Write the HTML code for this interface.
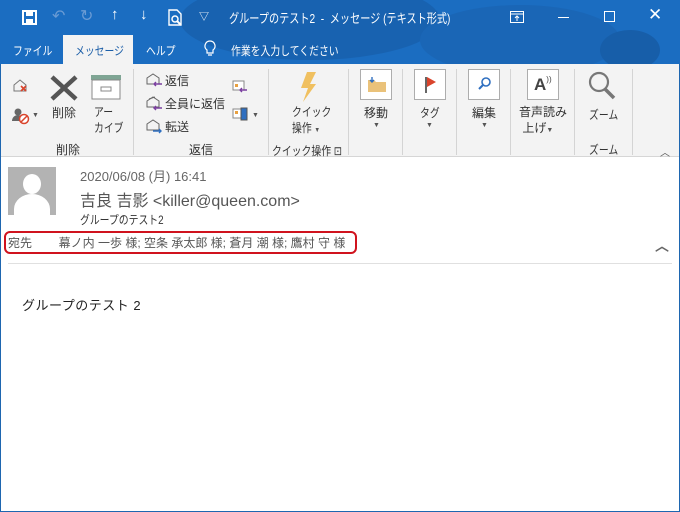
<!DOCTYPE html>
<html><head><meta charset="utf-8"><style>
*{margin:0;padding:0;box-sizing:border-box}
body{width:680px;height:512px;overflow:hidden;background:#fff;font-family:"Liberation Sans","Noto Sans CJK JP",sans-serif;position:relative;color:#222}
.a{position:absolute;white-space:nowrap}
.c{transform:scaleX(.82);transform-origin:0 0}
#top{position:absolute;left:0;top:0;width:680px;height:64px;background:#1b6dc1;overflow:hidden}
.blob{position:absolute;background:#1862b0;border-radius:50%}
.w{color:#fff}
#rib{position:absolute;left:1px;top:64px;width:678px;height:93px;background:#f3f3f3;border-bottom:1px solid #d6d6d6}
.sep{position:absolute;top:5px;width:1px;height:86px;background:#d4d4d4}
.t{font-size:12px;color:#333}
.box{position:absolute;width:32px;height:31px;border:1px solid #adadad;background:#fff}
.frame{position:absolute;left:0;top:64px;width:680px;height:448px;border:1px solid #1e66b0;border-top:none;pointer-events:none}
</style></head><body>
<div id="top">
 <div class="blob" style="left:180px;top:-20px;width:260px;height:80px"></div>
 <div class="blob" style="left:420px;top:5px;width:200px;height:70px;background:#1a66b6"></div>
 <div class="blob" style="left:600px;top:30px;width:60px;height:40px;background:#175ea9"></div>
 <svg class="a" style="left:22px;top:10px" width="16" height="16"><rect x="1" y="1" width="13" height="13" fill="none" stroke="#fff" stroke-width="2"/><rect x="4" y="2" width="7" height="4" fill="#fff"/><rect x="4" y="9" width="7" height="4" fill="#fff"/></svg>
 <div class="a" style="left:52px;top:6px;font-size:16px;color:#6a9bd4">↶</div>
 <div class="a" style="left:80px;top:6px;font-size:16px;color:#6a9bd4">↻</div>
 <div class="a w" style="left:111px;top:6px;font-size:15px;font-weight:bold">↑</div>
 <div class="a w" style="left:140px;top:6px;font-size:15px;font-weight:bold">↓</div>
 <svg class="a" style="left:168px;top:9px" width="16" height="18"><path d="M1 1h8l4 4v11H1z" fill="none" stroke="#fff" stroke-width="1.4"/><circle cx="7" cy="10" r="3" fill="none" stroke="#fff" stroke-width="1.5"/><path d="M9 12l4 4" stroke="#fff" stroke-width="2"/></svg>
 <div class="a w" style="left:199px;top:8px;font-size:10px">▽</div>
 <div class="a w" style="left:229px;top:8px;font-size:13px;transform:scaleX(.78);transform-origin:0 0">グループのテスト2 &nbsp;- &nbsp;メッセージ (テキスト形式)</div>
 <svg class="a" style="left:510px;top:11px" width="14" height="12"><rect x=".5" y=".5" width="13" height="11" fill="none" stroke="#fff"/><path d="M1 3h12M7 10V5M5 7l2-2 2 2" stroke="#fff" fill="none"/></svg>
 <div class="a" style="left:558px;top:17px;width:11px;height:1px;background:#fff"></div>
 <div class="a" style="left:604px;top:11px;width:11px;height:11px;border:1px solid #fff"></div>
 <div class="a w" style="left:648px;top:5px;font-size:17px">✕</div>
 <div class="a w c" style="left:13px;top:42px;font-size:12px">ファイル</div>
 <div class="a" style="left:63px;top:35px;width:70px;height:29px;background:#f3f3f3"></div>
 <div class="a c" style="left:75px;top:42px;font-size:12px;color:#1d5fa8">メッセージ</div>
 <div class="a w c" style="left:146px;top:42px;font-size:12px">ヘルプ</div>
 <svg class="a" style="left:204px;top:40px" width="12" height="18"><path d="M6 1a5 5 0 0 0-3 9v3h6v-3a5 5 0 0 0-3-9zM4 15h4" fill="none" stroke="#fff" stroke-width="1.2"/></svg>
 <div class="a w c" style="left:231px;top:42px;font-size:12px">作業を入力してください</div>
</div>
<div id="rib">
 <svg class="a" style="left:11px;top:13px" width="18" height="16"><path d="M2 8l6-5 6 5v6H2z" fill="none" stroke="#777"/><path d="M9 9l5 5M14 9l-5 5" stroke="#d9442c" stroke-width="1.6"/></svg>
 <svg class="a" style="left:11px;top:43px" width="18" height="18"><circle cx="6" cy="5" r="3.5" fill="#666"/><path d="M0 14a6 6 0 0 1 12 0z" fill="#666"/><circle cx="12" cy="12" r="4.5" fill="#fff" stroke="#d9442c" stroke-width="1.5"/><path d="M9 15l6-6" stroke="#d9442c" stroke-width="1.5"/></svg>
 <div class="a" style="left:31px;top:48px;font-size:7px;color:#555">▼</div>
 <svg class="a" style="left:48px;top:10px" width="30" height="28"><path d="M3 3l24 22M27 3L3 25" stroke="#555" stroke-width="4.5"/></svg>
 <div class="a t" style="left:51px;top:40px">削除</div>
 <svg class="a" style="left:89px;top:10px" width="32" height="26"><rect x="1" y="1" width="30" height="5" fill="#7fa594"/><rect x="2" y="6" width="28" height="19" fill="#fff" stroke="#888"/><rect x="11" y="13" width="10" height="4" fill="none" stroke="#888"/></svg>
 <div class="a t c" style="left:93px;top:40px;line-height:16px">アー<br>カイブ</div>
 <div class="a t" style="left:55px;top:77px">削除</div>
 <div class="sep" style="left:132px"></div>
 <svg class="a" style="left:145px;top:9px" width="18" height="14"><path d="M1 5l6-4 6 4v6H1z" fill="none" stroke="#666"/><path d="M16 11H8M10 9l-2 2 2 2" stroke="#7b3fa0" stroke-width="1.4" fill="none"/></svg>
 <div class="a t" style="left:164px;top:8px">返信</div>
 <svg class="a" style="left:145px;top:32px" width="18" height="15"><path d="M1 5l6-4 6 4v6H1z" fill="none" stroke="#666"/><path d="M3 3l6-2" stroke="#666"/><path d="M16 12H8M10 10l-2 2 2 2" stroke="#7b3fa0" stroke-width="1.4" fill="none"/></svg>
 <div class="a t" style="left:164px;top:31px">全員に返信</div>
 <svg class="a" style="left:145px;top:55px" width="18" height="15"><path d="M1 5l6-4 6 4v6H1z" fill="none" stroke="#666"/><path d="M7 12h8M13 10l2 2-2 2" stroke="#2f6fc0" stroke-width="1.4" fill="none"/></svg>
 <div class="a t" style="left:164px;top:54px">転送</div>
 <svg class="a" style="left:231px;top:16px" width="16" height="14"><rect x="1" y="1" width="11" height="9" fill="#fff" stroke="#888"/><rect x="3" y="4" width="3" height="3" fill="#e8a040"/><path d="M15 10H8M10 8l-2 2 2 2" stroke="#7b3fa0" stroke-width="1.4" fill="none"/></svg>
 <svg class="a" style="left:231px;top:43px" width="16" height="14"><rect x="1" y="2" width="9" height="9" fill="#fff" stroke="#888"/><rect x="3" y="4" width="3" height="3" fill="#e8a040"/><rect x="9" y="1" width="6" height="12" fill="#2f6fc0" stroke="#555"/></svg>
 <div class="a" style="left:251px;top:48px;font-size:7px;color:#555">▼</div>
 <div class="a t" style="left:188px;top:77px">返信</div>
 <div class="sep" style="left:267px"></div>
 <svg class="a" style="left:296px;top:7px" width="22" height="32"><path d="M10 1h9l-6 12h6L6 31l5-14H4z" fill="#f0c060"/></svg>
 <div class="a t c" style="left:291px;top:40px;line-height:16px">クイック<br>操作 <span style="font-size:7px;color:#555">▼</span></div>
 <div class="a t c" style="left:271px;top:78px;font-size:12px">クイック操作 ⊡</div>
 <div class="sep" style="left:347px"></div>
 <div class="box" style="left:359px;top:5px"><svg style="position:absolute;left:6px;top:7px" width="20" height="16"><path d="M1 3h6l2 2h10v10H1z" fill="#eac27a"/><path d="M5 0v5M3 3l2 2 2-2" stroke="#2f6fc0" stroke-width="1.4" fill="none"/></svg></div>
 <div class="a t" style="left:363px;top:40px">移動</div>
 <div class="a" style="left:372px;top:58px;font-size:7px;color:#555">▼</div>
 <div class="sep" style="left:401px"></div>
 <div class="box" style="left:413px;top:5px"><svg style="position:absolute;left:9px;top:6px" width="14" height="18"><rect x="1" y="1" width="2" height="16" fill="#666"/><path d="M3 1l9 5-9 5z" fill="#d9442c"/></svg></div>
 <div class="a t c" style="left:419px;top:40px">タグ</div>
 <div class="a" style="left:425px;top:58px;font-size:7px;color:#555">▼</div>
 <div class="sep" style="left:455px"></div>
 <div class="box" style="left:467px;top:5px"><svg style="position:absolute;left:9px;top:7px" width="14" height="14"><circle cx="8" cy="5" r="4" fill="none" stroke="#2f6fc0" stroke-width="1.6"/><path d="M5 8l-4 4" stroke="#2f6fc0" stroke-width="2"/></svg></div>
 <div class="a t" style="left:471px;top:40px">編集</div>
 <div class="a" style="left:480px;top:58px;font-size:7px;color:#555">▼</div>
 <div class="sep" style="left:509px"></div>
 <div class="box" style="left:526px;top:5px"><div class="a" style="left:6px;top:5px;font-size:17px;font-weight:bold;color:#444">A<span style="font-size:8px;font-weight:normal;vertical-align:top">))</span></div></div>
 <div class="a t" style="left:518px;top:40px;line-height:16px">音声読み<br>&nbsp;上げ<span style="font-size:7px;color:#555">▼</span></div>
 <div class="sep" style="left:573px"></div>
 <svg class="a" style="left:586px;top:6px" width="30" height="32"><circle cx="12" cy="12" r="9" fill="none" stroke="#777" stroke-width="2.2"/><path d="M18 19l9 9" stroke="#777" stroke-width="3.5"/></svg>
 <div class="a t c" style="left:588px;top:42px">ズーム</div>
 <div class="a t c" style="left:588px;top:77px">ズーム</div>
 <div class="sep" style="left:631px"></div>
 <div class="a" style="left:659px;top:80px;font-size:10px;color:#555">︿</div>
</div>
<div class="a" style="left:8px;top:167px;width:48px;height:48px;background:#b3b3b3;overflow:hidden">
 <div class="a" style="left:15px;top:7px;width:18px;height:20px;border-radius:50%;background:#fff"></div>
 <div class="a" style="left:6px;top:27px;width:36px;height:30px;border-radius:50% 50% 0 0;background:#fff"></div>
</div>
<div class="a" style="left:80px;top:166px;font-size:13px;color:#666">2020/06/08 (月) 16:41</div>
<div class="a" style="left:80px;top:187px;font-size:16px;color:#555">吉良 吉影 &lt;killer@queen.com&gt;</div>
<div class="a c" style="left:80px;top:211px;font-size:12px;color:#333">グループのテスト2</div>
<div class="a" style="left:4px;top:231px;width:353px;height:23px;border:2px solid #d0131e;border-radius:6px"></div>
<div class="a" style="left:8px;top:234px;font-size:12px;color:#555">宛先 &nbsp;&nbsp;&nbsp;&nbsp;&nbsp;&nbsp;&nbsp;幕ノ内 一歩 様; 空条 承太郎 様; 蒼月 潮 様; 鷹村 守 様</div>
<div class="a" style="left:655px;top:236px;font-size:14px;color:#666;font-weight:bold">︿</div>
<div class="a" style="left:8px;top:263px;width:664px;height:1px;background:#e0e0e0"></div>
<div class="a" style="left:22px;top:295px;font-size:13px;color:#222;letter-spacing:0.5px">グループのテスト 2</div>
<div class="frame"></div>
</body></html>
